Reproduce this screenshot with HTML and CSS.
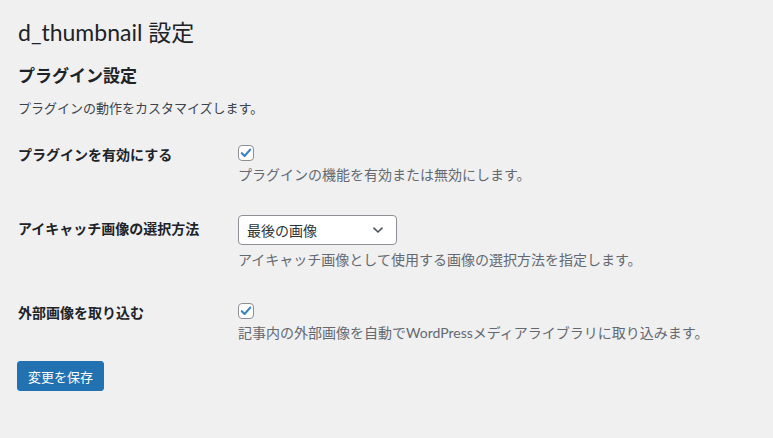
FILE: index.html
```html
<!DOCTYPE html>
<html lang="ja">
<head>
<meta charset="utf-8">
<title>d_thumbnail 設定</title>
<link rel="stylesheet" href="styles.css">
</head>
<body>
<div class="wrap">
  <h1 class="title">d_thumbnail 設定</h1>
  <h2 class="section">プラグイン設定</h2>
  <p class="intro">プラグインの動作をカスタマイズします。</p>

  <div class="row row-first">
    <div class="label label-check">プラグインを有効にする</div>
    <div class="field">
      <span class="checkbox"><svg viewBox="0 0 16 16" width="16" height="16"><path d="M3.8 8.2 L6.6 11 L12.2 4.6" fill="none" stroke="#3582c4" stroke-width="2.1" stroke-linecap="round" stroke-linejoin="round"/></svg></span>
      <p class="desc">プラグインの機能を有効または無効にします。</p>
    </div>
  </div>

  <div class="row row-second">
    <div class="label label-select">アイキャッチ画像の選択方法</div>
    <div class="field">
      <div class="select">
        <span class="select-text">最後の画像</span>
        <svg class="chev" viewBox="0 0 16 16" width="16" height="16"><path d="M4 6.2 L8 10 L12 6.2" fill="none" stroke="#50575e" stroke-width="1.7" stroke-linecap="round" stroke-linejoin="round"/></svg>
      </div>
      <p class="desc">アイキャッチ画像として使用する画像の選択方法を指定します。</p>
    </div>
  </div>

  <div class="row row-third">
    <div class="label label-check">外部画像を取り込む</div>
    <div class="field">
      <span class="checkbox"><svg viewBox="0 0 16 16" width="16" height="16"><path d="M3.8 8.2 L6.6 11 L12.2 4.6" fill="none" stroke="#3582c4" stroke-width="2.1" stroke-linecap="round" stroke-linejoin="round"/></svg></span>
      <p class="desc">記事内の外部画像を自動でWordPressメディアライブラリに取り込みます。</p>
    </div>
  </div>

  <div class="submit">
    <button class="button-primary" type="button">変更を保存</button>
  </div>
</div>
</body>
</html>
```

FILE: styles.css
```css
html, body {
  margin: 0;
  padding: 0;
  background: #f0f0f1;
}
body {
  font-family: "Lato", "Noto Sans CJK JP", sans-serif;
  color: #1d2327;
  font-size: 13px;
}
.wrap {
  padding: 17px 18px 0 18px;
}
.title {
  margin: 0;
  font-size: 23px;
  font-weight: 400;
  line-height: 30px;
}
.section {
  margin: 18px 0 0 0;
  font-size: 17px;
  font-weight: 700;
  line-height: 22px;
}
.intro {
  margin: 11px 0 0 0;
  font-size: 13px;
  line-height: 20px;
  color: #3c434a;
}
.row {
  display: grid;
  grid-template-columns: 220px 1fr;
}
.row-first { margin-top: 27px; }
.row-second { margin-top: 30px; }
.row-third { margin-top: 33px; }
.label {
  font-size: 14px;
  font-weight: 700;
  line-height: 20px;
}
.label-select { padding-top: 4px; }
.field {
  display: flex;
  flex-direction: column;
  align-items: flex-start;
}
.checkbox {
  display: block;
  width: 14px;
  height: 14px;
  border: 1px solid #8c8f94;
  border-radius: 4px;
  background: #fff;
  position: relative;
  margin-bottom: 4px;
}
.checkbox svg {
  position: absolute;
  left: -1px;
  top: -1px;
}
.desc {
  margin: 0;
  font-size: 14px;
  line-height: 20px;
  color: #646970;
}
.select {
  box-sizing: border-box;
  width: 159px;
  height: 30px;
  border: 1px solid #8c8f94;
  border-radius: 4px;
  background: #fff;
  display: flex;
  align-items: center;
  justify-content: space-between;
  padding: 0 10px 0 8px;
  margin-bottom: 5px;
}
.select-text {
  font-size: 14px;
  color: #2c3338;
}
.chev { display: block; }
.submit {
  margin-top: 18px;
}
.button-primary {
  box-sizing: border-box;
  margin: 0 0 0 -1px;
  width: 87px;
  height: 30px;
  border: 1px solid #2271b1;
  border-radius: 3px;
  background: #2271b1;
  color: #fff;
  font-family: "Lato", "Noto Sans CJK JP", sans-serif;
  font-size: 13px;
  padding: 0;
  cursor: pointer;
}
```
